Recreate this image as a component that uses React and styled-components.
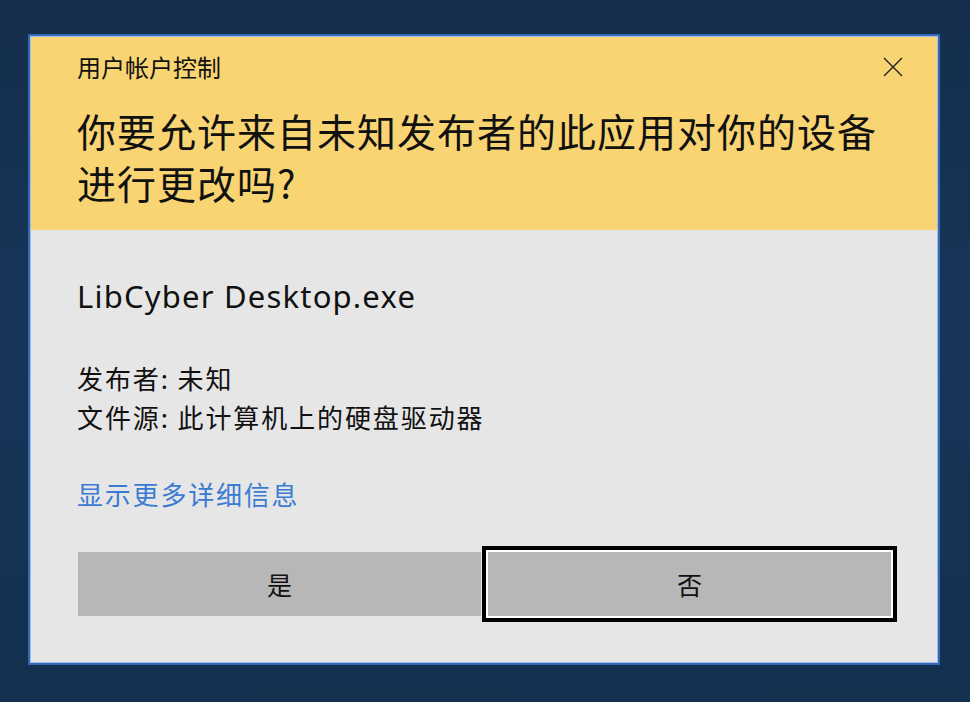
import React from "react";
import styled, { createGlobalStyle } from "styled-components";

const GlobalStyle = createGlobalStyle`
  html, body {
    margin: 0;
    padding: 0;
    width: 970px;
    height: 702px;
    overflow: hidden;
    background: linear-gradient(180deg, #142d4b 0%, #17365a 45%, #13304f 100%);
  }
  body {
    font-family: "Noto Sans", "Noto Sans CJK SC", sans-serif;
  }
`;

const Screen = styled.div`
  padding: 34px 0 0 28px;
`;

const Dialog = styled.div`
  width: 908px;
  height: 627px;
  border: 2px solid #3567b4;
  box-shadow: inset 0 0 0 1px #9fc0ee;
  display: flex;
  flex-direction: column;
  background: #e6e6e6;
`;

const Header = styled.div`
  background: #f9d473;
  height: 193px;
  margin: 1px 1px 0;
  padding: 14px 0 0 46px;
  box-sizing: border-box;
  display: flex;
  flex-direction: column;
`;

const TopRow = styled.div`
  display: flex;
  justify-content: space-between;
  align-items: center;
  padding-right: 32px;
`;

const Caption = styled.div`
  font-family: "Noto Sans CJK SC", sans-serif;
  font-size: 24px;
  line-height: 32px;
  color: #111;
`;

const Close = styled.button`
  width: 24px;
  height: 24px;
  border: none;
  padding: 0;
  background: none;
  display: flex;
  align-items: center;
  justify-content: center;
`;

const Question = styled.div`
  margin-top: 21px;
  font-family: "Noto Sans CJK SC", sans-serif;
  font-size: 39px;
  line-height: 52px;
  color: #111;
  letter-spacing: 1px;
`;

const Body = styled.div`
  padding: 46px 47px 0 47px;
  display: flex;
  flex-direction: column;
`;

const AppName = styled.div`
  font-family: "Noto Sans", sans-serif;
  font-size: 31px;
  line-height: 40px;
  color: #111;
  letter-spacing: 1.2px;
`;

const Details = styled.div`
  margin-top: 42px;
  font-family: "Noto Sans CJK SC", sans-serif;
  font-size: 26px;
  line-height: 39px;
  color: #111;
  letter-spacing: 1.9px;
`;

const MoreLink = styled.a`
  margin-top: 40px;
  font-family: "Noto Sans CJK SC", sans-serif;
  font-size: 26px;
  line-height: 36px;
  color: #3a7bd3;
  letter-spacing: 1.8px;
  text-decoration: none;
  align-self: flex-start;
`;

const Buttons = styled.div`
  margin-top: 40px;
  margin-left: 1px;
  display: flex;
  gap: 7px;
`;

const Button = styled.button`
  flex: 1;
  height: 64px;
  border: none;
  background: #b7b7b7;
  font-family: "Noto Sans CJK SC", sans-serif;
  font-size: 25px;
  color: #111;
  outline: ${(p) => (p.$focused ? "4px solid #000" : "none")};
  outline-offset: 2px;
  box-shadow: ${(p) => (p.$focused ? "0 0 0 2px #fff" : "none")};
`;

export default function App() {
  return (
    <>
      <GlobalStyle />
      <Screen>
        <Dialog>
          <Header>
            <TopRow>
              <Caption>用户帐户控制</Caption>
              <Close aria-label="关闭">
                <svg width="20" height="20" viewBox="0 0 20 20">
                  <path d="M1 1 L19 19 M19 1 L1 19" stroke="#222" strokeWidth="1.4" fill="none" />
                </svg>
              </Close>
            </TopRow>
            <Question>
              你要允许来自未知发布者的此应用对你的设备
              <br />
              进行更改吗?
            </Question>
          </Header>
          <Body>
            <AppName>LibCyber Desktop.exe</AppName>
            <Details>
              发布者: 未知
              <br />
              文件源: 此计算机上的硬盘驱动器
            </Details>
            <MoreLink href="#">显示更多详细信息</MoreLink>
            <Buttons>
              <Button>是</Button>
              <Button $focused>否</Button>
            </Buttons>
          </Body>
        </Dialog>
      </Screen>
    </>
  );
}
